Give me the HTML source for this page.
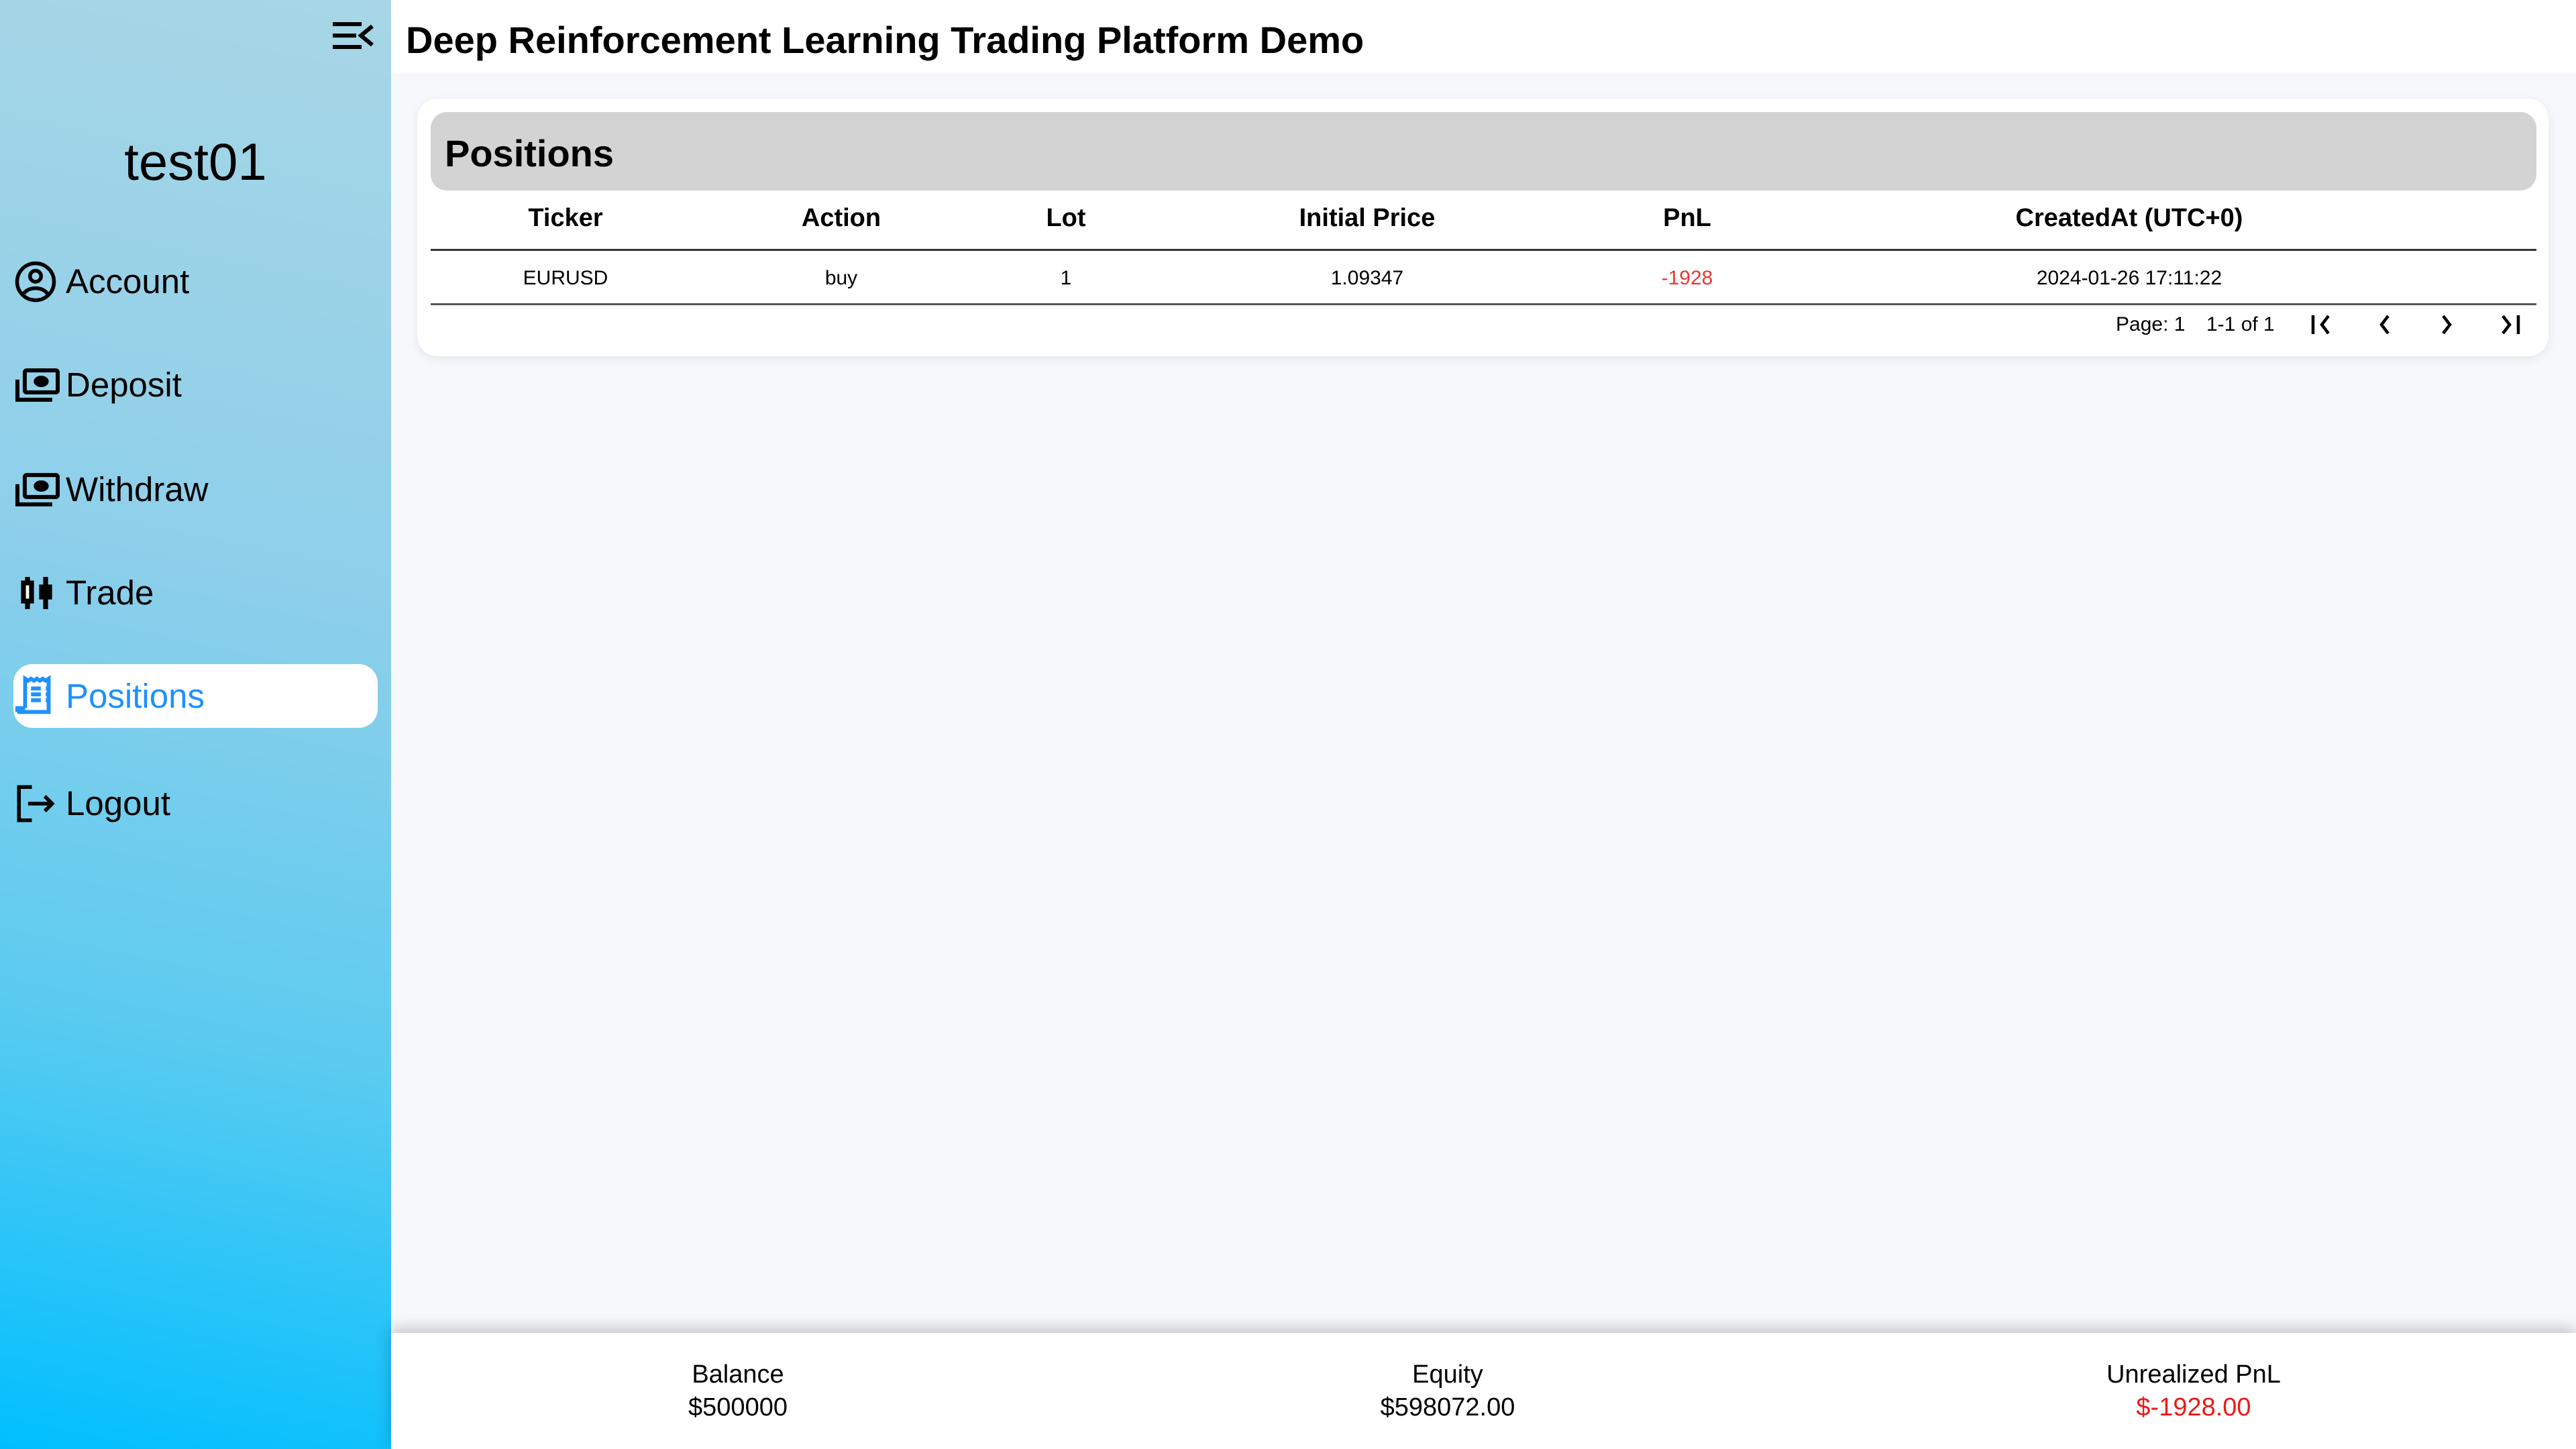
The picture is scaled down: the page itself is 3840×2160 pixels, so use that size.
<!DOCTYPE html>
<html><head><meta charset="utf-8">
<style>
*{margin:0;padding:0;box-sizing:border-box}
html,body{width:3840px;height:2160px;overflow:hidden;font-family:"Liberation Sans",sans-serif;background:#f7f8fc;color:#000}
#side{position:absolute;left:0;top:0;width:583px;height:2160px;background:linear-gradient(12deg,#00bfff 0%,#5ccbf0 30%,#8dcfea 60%,#a8d6e6 100%)}
#head{position:absolute;left:583px;top:0;width:3257px;height:108px;background:#fff}
#head h1{position:absolute;left:22px;top:27px;font-size:56px;font-weight:bold;white-space:nowrap}
.abs{position:absolute;white-space:nowrap}
.item{position:absolute;left:20px;width:543px;height:95px;display:flex;align-items:center;font-size:51px}
.item svg{margin-right:6px}
.item span{position:absolute;left:78px}
#card{position:absolute;left:622px;top:147px;width:3177px;height:384px;background:#fff;border-radius:30px;box-shadow:0 4px 14px rgba(0,0,0,.08)}
#gh{position:absolute;left:642px;top:167px;width:3139px;height:117px;background:#d3d3d3;border-radius:24px}
.th{position:absolute;top:304px;font-size:38px;font-weight:bold;transform:translateX(-50%)}
.td{position:absolute;top:398px;font-size:30px;transform:translateX(-50%)}
#foot{position:absolute;left:583px;top:1987px;width:3257px;height:173px;background:#fff;box-shadow:0 -6px 22px rgba(0,0,0,.22)}
.fl{position:absolute;font-size:38px;text-align:center;transform:translateX(-50%);line-height:49px}
</style></head><body>
<div id="side">
  <svg class="abs" style="left:490px;top:30px" width="70" height="48" viewBox="490 30 70 48">
    <path d="M496 36H539M496 53H531M496 70H539" stroke="#000" stroke-width="6"/>
    <path d="M555 39L538 53L555 67" stroke="#000" stroke-width="6" fill="none"/>
  </svg>
  <div class="abs" style="left:0;width:583px;text-align:center;top:196px;font-size:78px">test01</div>

  <div class="item" style="top:372px">
    <svg width="66" height="66" viewBox="0 0 24 24" fill="none" stroke="#000" stroke-width="2"><circle cx="12" cy="12" r="10"/><circle cx="12" cy="9" r="3"/><path d="M5.5 18.5c1.5-2 3.8-3 6.5-3s5 1 6.5 3"/></svg>
    <span>Account</span></div>
  <div class="item" style="top:526px">
    <svg width="72" height="60" viewBox="0 0 26 22" fill="none" stroke="#000" stroke-width="2.2"><path d="M2 8v11h19"/><rect x="6" y="3" width="18" height="12" rx="1"/><ellipse cx="15" cy="9" rx="3" ry="2" fill="#000"/></svg>
    <span>Deposit</span></div>
  <div class="item" style="top:682px">
    <svg width="72" height="60" viewBox="0 0 26 22" fill="none" stroke="#000" stroke-width="2.2"><path d="M2 8v11h19"/><rect x="6" y="3" width="18" height="12" rx="1"/><ellipse cx="15" cy="9" rx="3" ry="2" fill="#000"/></svg>
    <span>Withdraw</span></div>
  <div class="item" style="top:836px">
    <svg width="72" height="60" viewBox="0 0 24 20" fill="none" stroke="#000" stroke-width="2.4"><path d="M7 2v16M16 2v16"/><rect x="5" y="5" width="4" height="9" fill="#fff"/><rect x="14" y="7" width="4" height="5" fill="#000"/></svg>
    <span>Trade</span></div>
  <div class="item" style="top:990px;background:#fff;border-radius:28px;color:#1e90ff">
    <svg width="70" height="70" viewBox="0 0 24 24" fill="none" stroke="#1e90ff" stroke-width="2"><path d="M6 18V3l1.5 1 1.5-1 1.5 1 1.5-1 1.5 1 1.5-1 1.5 1 1.5-1v18"/><path d="M9 8h5M9 11h5M9 14h5M16.5 8h.5M16.5 11h.5M16.5 14h.5"/><path d="M2 20h15"/><path d="M2 20v-2h4"/></svg>
    <span>Positions</span></div>
  <div class="item" style="top:1150px">
    <svg width="66" height="66" viewBox="0 0 24 24" fill="none" stroke="#000" stroke-width="2"><path d="M10 3H3v18h7"/><path d="M8 12h13M17 8l4 4-4 4"/></svg>
    <span>Logout</span></div>
</div>

<div id="head"><h1>Deep Reinforcement Learning Trading Platform Demo</h1></div>

<div id="card"></div>
<div id="gh"></div>
<div class="abs" style="left:663px;top:196px;font-size:56px;font-weight:bold">Positions</div>

<div class="th" style="left:843px">Ticker</div>
<div class="th" style="left:1254px">Action</div>
<div class="th" style="left:1589px">Lot</div>
<div class="th" style="left:2038px">Initial Price</div>
<div class="th" style="left:2515px">PnL</div>
<div class="th" style="left:3174px">CreatedAt (UTC+0)</div>
<div class="abs" style="left:642px;top:371px;width:3139px;height:3px;background:#333"></div>
<div class="td" style="left:843px">EURUSD</div>
<div class="td" style="left:1254px">buy</div>
<div class="td" style="left:1589px">1</div>
<div class="td" style="left:2038px">1.09347</div>
<div class="td" style="left:2515px;color:#e53935">-1928</div>
<div class="td" style="left:3174px">2024-01-26 17:11:22</div>
<div class="abs" style="left:642px;top:452px;width:3139px;height:3px;background:#555"></div>

<div class="abs" style="left:3154px;top:467px;font-size:30px">Page: 1</div>
<div class="abs" style="left:3289px;top:467px;font-size:30px">1-1 of 1</div>
<svg class="abs" style="left:3440px;top:466px" width="360" height="38" viewBox="3440 466 360 38">
  <g stroke="#000" stroke-width="4.5" fill="none">
    <path d="M3448 470v28M3471 471l-10 13 10 13"/>
    <path d="M3560 471l-10 13 10 13"/>
    <path d="M3642 471l10 13-10 13"/>
    <path d="M3731 471l10 13-10 13M3754 470v28"/>
  </g>
</svg>

<div id="foot">
  <div class="fl" style="left:517px;top:38px">Balance<br>$500000</div>
  <div class="fl" style="left:1575px;top:38px">Equity<br>$598072.00</div>
  <div class="fl" style="left:2687px;top:38px">Unrealized PnL<br><span style="color:#f01818">$-1928.00</span></div>
</div>
</body></html>
